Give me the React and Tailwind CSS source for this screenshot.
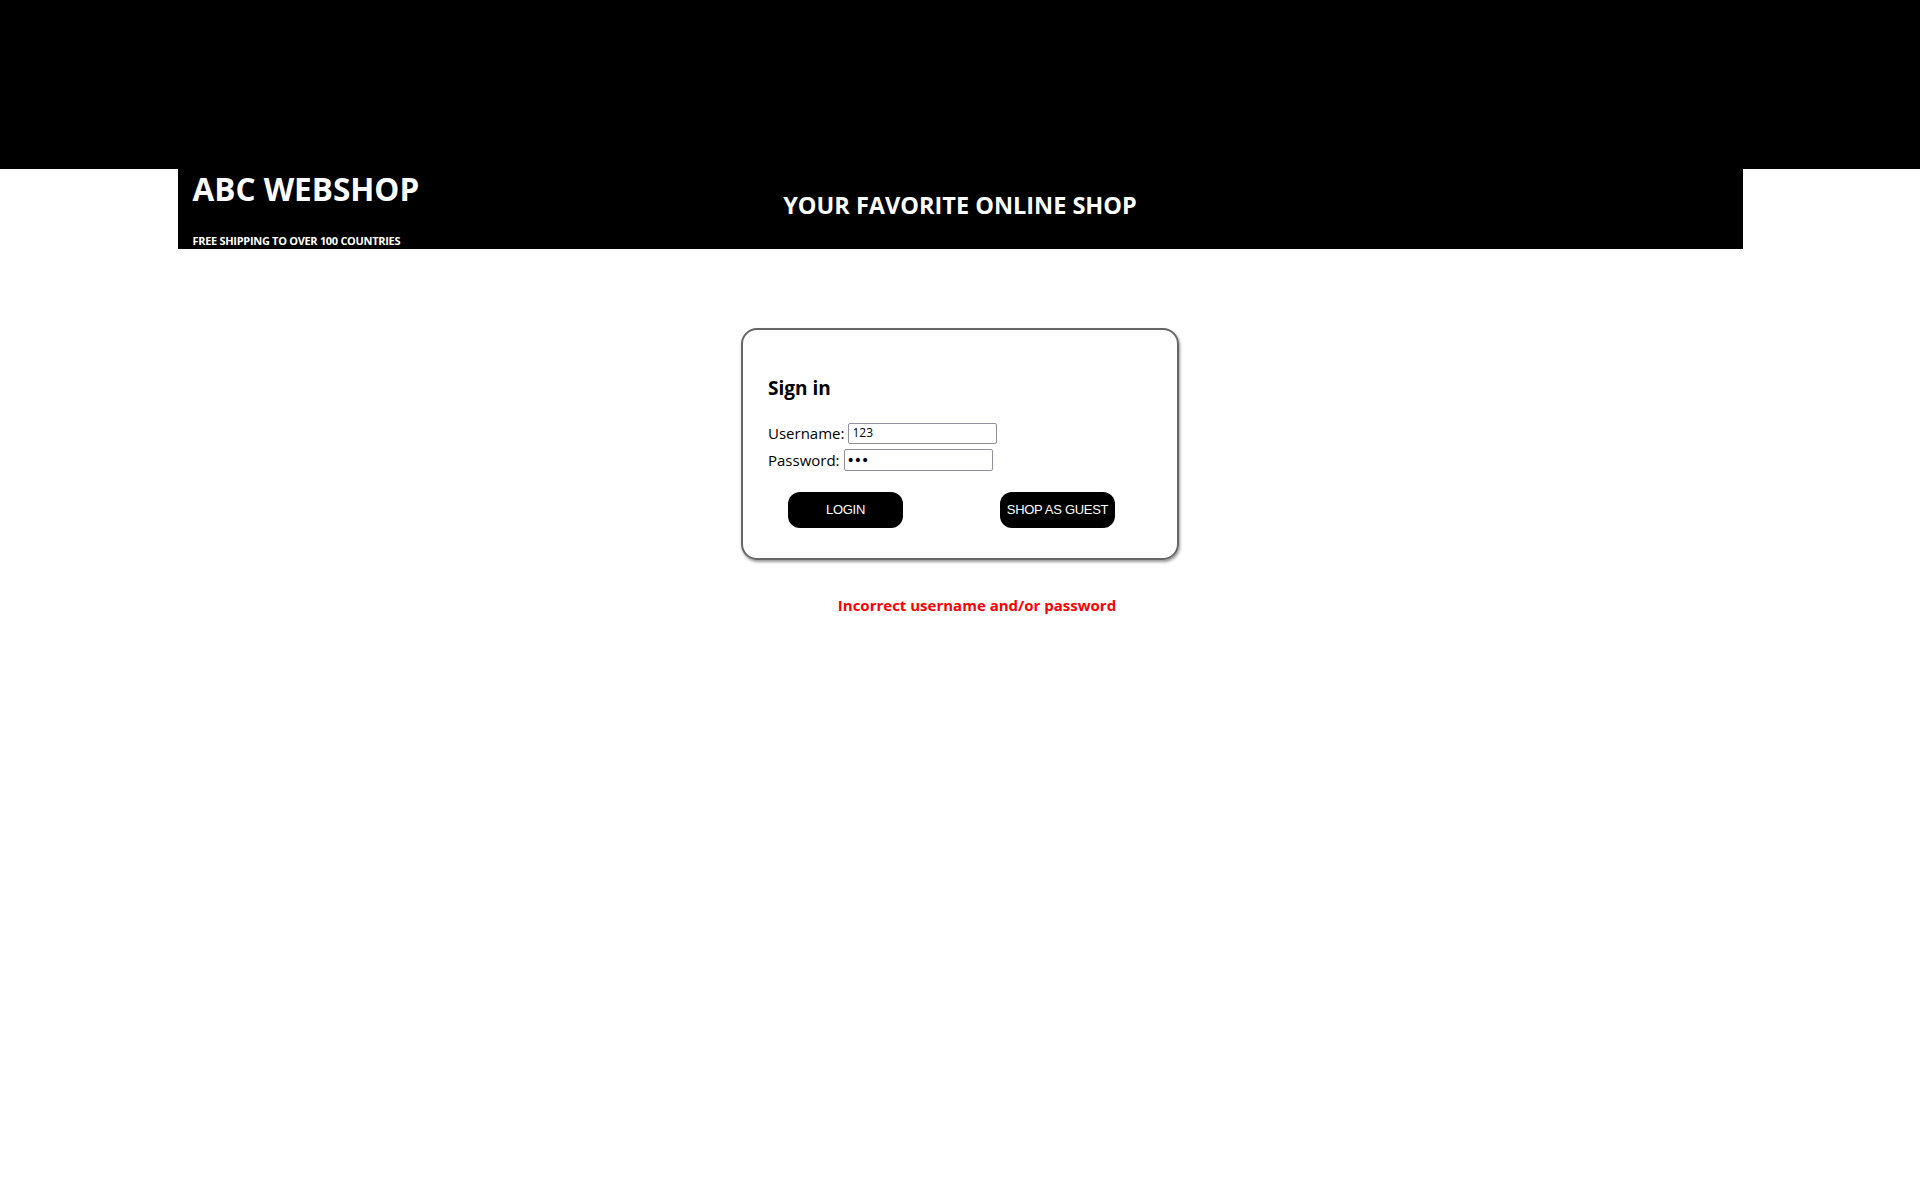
import React, { useState } from "react";

const sans = "font-['Open_Sans','Noto_Sans',sans-serif]";

export default function App() {
  const [username, setUsername] = useState("123");
  const [password, setPassword] = useState("123");

  return (
    <div className={`min-h-[1198px] bg-white ${sans}`}>
      {/* top band */}
      <div className="h-[169px] bg-black" />

      {/* header bar */}
      <div className="mx-auto grid h-[80px] w-[1565px] grid-cols-[1fr_auto_1fr] bg-black text-white">
        <div className="flex flex-col pl-[15px]">
          <h1 className="mt-[0px] text-[31.5px] font-bold leading-[40px]">ABC WEBSHOP</h1>
          <p className="mt-[25px] text-[11px] font-bold leading-[14px] tracking-[-0.3px]">
            FREE SHIPPING TO OVER 100 COUNTRIES
          </p>
        </div>
        <h2 className="mt-[21px] text-[23.5px] font-bold leading-[30px]">YOUR FAVORITE ONLINE SHOP</h2>
        <div />
      </div>

      {/* sign in box */}
      <div className="mx-auto mt-[79px] h-[232px] w-[438px] rounded-[16px] border-2 border-[#666] px-[25px] pt-[45px] shadow-[1px_2px_3px_#999]">
        <h3 className="text-[19px] font-bold leading-[26px] text-black">Sign in</h3>
        <form
          className="mt-[21px] flex flex-col gap-[5px] text-[15px] text-black"
          onSubmit={(e) => e.preventDefault()}
        >
          <label className="flex items-center gap-[4px] leading-[22px]">
            Username:
            <input
              value={username}
              onChange={(e) => setUsername(e.target.value)}
              className="h-[21px] w-[149px] rounded-[2px] border border-[#8f8f9d] px-[3px] text-[12px] outline-none"
            />
          </label>
          <label className="flex items-center gap-[4px] leading-[22px]">
            Password:
            <input
              type="password"
              value={password}
              onChange={(e) => setPassword(e.target.value)}
              className="h-[22px] w-[149px] rounded-[2px] border border-[#8f8f9d] px-[2px] font-['DejaVu_Sans',sans-serif] text-[14px] tracking-[-1px] outline-none"
            />
          </label>
          <div className="mt-[16px] flex gap-[97px] pl-[20px]">
            <button className="h-[36px] w-[115px] rounded-[12px] bg-black font-['Liberation_Sans',sans-serif] text-[13px] tracking-[-0.3px] text-white">
              LOGIN
            </button>
            <button
              type="button"
              className="h-[36px] w-[115px] rounded-[12px] bg-black font-['Liberation_Sans',sans-serif] text-[13px] tracking-[-0.3px] text-white"
            >
              SHOP AS GUEST
            </button>
          </div>
        </form>
      </div>

      <p className="mt-[34px] pl-[34px] text-center text-[15px] font-bold text-[#ff0000]">
        Incorrect username and/or password
      </p>
    </div>
  );
}
